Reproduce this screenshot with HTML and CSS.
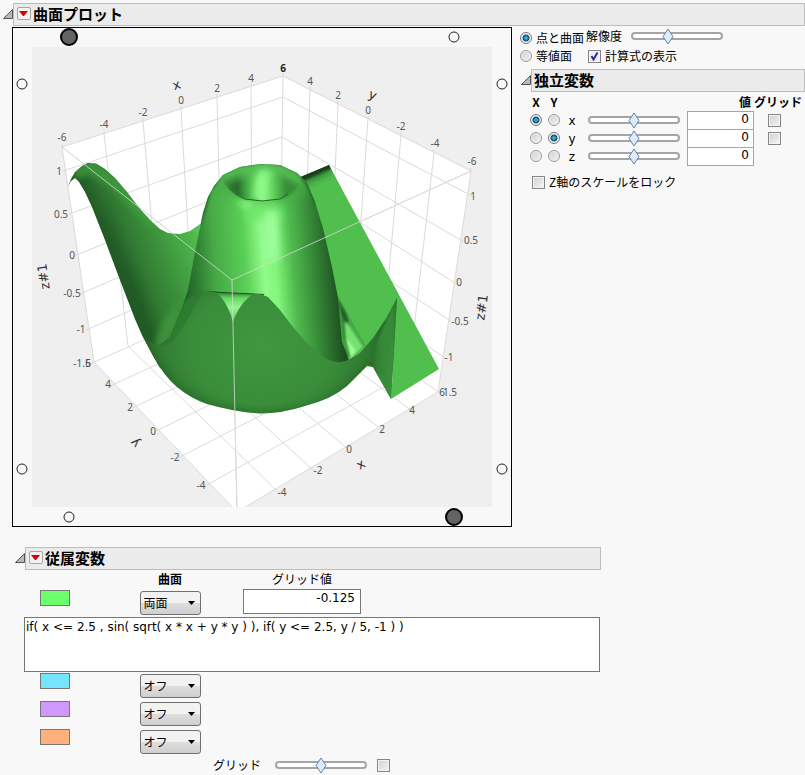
FILE: index.html
```html
<!DOCTYPE html>
<html lang="ja">
<head>
  <meta charset="utf-8">
  <title>曲面プロット</title>
  <link rel="stylesheet" href="styles.css">
</head>
<body>
  <div class="title">
    <button class="toggle" aria-label="開閉"><svg width="10" height="10"><path d="M.5 9.5L9.500.5V9.500Z"/></svg></button>
    <div class="bar">
      <button class="menu" aria-label="メニュー"><svg width="10" height="6"><path d="M0 0H9L5 5H4Z"/></svg></button>
      <h1>曲面プロット</h1>
    </div>
  </div>

  <div class="main">
    <div class="plot">
      <svg viewBox="12 27 500 500" role="img" aria-label="曲面">
        <defs>
          <linearGradient id="fin" gradientUnits="userSpaceOnUse" x1="108" y1="265" x2="205" y2="225">
            <stop offset="0" stop-color="#1f5522"/>
            <stop offset=".2" stop-color="#2d7030"/>
            <stop offset=".5" stop-color="#3b903b"/>
            <stop offset=".85" stop-color="#4fb84e"/>
            <stop offset="1" stop-color="#5bce58"/>
          </linearGradient>
          <linearGradient id="tower" gradientUnits="userSpaceOnUse" x1="184" y1="270" x2="337" y2="258">
            <stop offset="0" stop-color="#246028"/>
            <stop offset=".1" stop-color="#328234"/>
            <stop offset=".2" stop-color="#46a846"/>
            <stop offset=".4" stop-color="#5acf56"/>
            <stop offset=".52" stop-color="#91fb8a"/>
            <stop offset=".6" stop-color="#82f57c"/>
            <stop offset=".71" stop-color="#50ba4e"/>
            <stop offset=".84" stop-color="#378b38"/>
            <stop offset="1" stop-color="#1c4e20"/>
          </linearGradient>
          <linearGradient id="crater" gradientUnits="userSpaceOnUse" x1="221" y1="186" x2="302" y2="183">
            <stop offset="0" stop-color="#3b903b"/>
            <stop offset=".2" stop-color="#286b2b"/>
            <stop offset=".36" stop-color="#50c04f"/>
            <stop offset=".5" stop-color="#8efa88"/>
            <stop offset=".64" stop-color="#5fd55c"/>
            <stop offset=".8" stop-color="#388d39"/>
            <stop offset="1" stop-color="#3b933c"/>
          </linearGradient>
          <radialGradient id="bowl" gradientUnits="userSpaceOnUse" cx="262" cy="345" r="120" gradientTransform="translate(0 70) scale(1 .8)">
            <stop offset="0" stop-color="#40973f"/>
            <stop offset=".6" stop-color="#3a8d3a"/>
            <stop offset=".85" stop-color="#317c33"/>
            <stop offset="1" stop-color="#286a2b"/>
          </radialGradient>
          <linearGradient id="notch" x1="0" y1="0" x2="0" y2="1">
            <stop offset="0" stop-color="#2f7a31"/>
            <stop offset=".2" stop-color="#66d863"/>
            <stop offset=".5" stop-color="#94f78d"/>
            <stop offset="1" stop-color="#57c855"/>
          </linearGradient>
          <linearGradient id="flap" x1="0" y1="0" x2="1" y2="0">
            <stop offset="0" stop-color="#2b702d"/>
            <stop offset=".35" stop-color="#378a38"/>
            <stop offset=".75" stop-color="#3a903a"/>
            <stop offset="1" stop-color="#2e782f"/>
          </linearGradient>
          <filter id="edge" x="-20%" y="-20%" width="140%" height="140%"><feGaussianBlur stdDeviation="1"/></filter>
          <filter id="soft" x="-50%" y="-50%" width="200%" height="200%"><feGaussianBlur stdDeviation="3"/></filter>
          <filter id="softer" x="-50%" y="-50%" width="200%" height="200%"><feGaussianBlur stdDeviation="6"/></filter>
          <clipPath id="view"><path d="M32 47H492V507H32Z"/></clipPath>
          <clipPath id="flatClip"><path d="M298 178L329 165L439 369L391 399L393 370L350 360Z"/></clipPath>
          <clipPath id="finClip"><path d="M68 187L71 179L75 172L82 166L88 163L96 163.500L105 169L115 178L127 192L140 209L151 221L160 229L168 233L180 234L190 231L203 222L210 290L190 380L160 368L142 335L135 319L120 280L105 240L92 207L85 192L79 182L75 178L71 181Z"/></clipPath>
          <clipPath id="towerClip"><path d="M157 347L170 337L182 308L188 290L195 252L203 213L208 197L214 186L223 175L240 167L260 164L280 165L297 173L307 183L315 202L323 228L332 267L339 303L349 360L337 366L300 360L240 340L180 350Z"/></clipPath>
          <clipPath id="bowlClip"><path d="M142 335L150 342L157 346L163 347L172 343L183 327L193 310Q201 292 208 291L217 293C225 300 230 311 233 322C237 310 244 300 252 295L260 294L268 297L280 310L293 327L307 343L320 355Q337 367 350 359L360 353L373 338L387 317L397 298L391 399L373 367L367 366L347 386Q332 399 305 406Q282 413.500 260 413.500Q235 412 207 404Q190 398 177 387Q164 376 153 356Z"/></clipPath>
        </defs>

        <rect class="backdrop" x="32" y="47" width="460" height="460"/>
        <g clip-path="url(#view)">
          <path class="cube" d="M62 147L283 76L471 171L438 392L237 512L94 362Z"/>
          <path class="gridline" d="M62 144V147L94 362M104 131V134L128 346M143 118V121L161 331M181 106V109L193 318M217 94V97L222 305M251 83V86L252 292M283 73V76L280 279
            M310 86V89L304 297M338 101V104L329 315M368 116V119L353 335M401 132V135L382 353M434 150V153L409 373M471 168V171L438 392
            M63 171L283 97L472 196M69 214L282 137L466 243M74 256L281 172L458 285M80 294L280 208L452 322M86 330L280 245L445 358M90 364L280 279L441 394
            M110 386L304 297M132 408L329 315M154 432L353 335M178 458L382 353M205 486L409 373
            M412 411L252 292M382 430L222 305M349 450L193 318M314 471L161 331M279 493L128 346
            M62 147L283 76L471 171M94 362L237 512L438 392"/>
          <path class="floor-edge" d="M62 147L232 280L471 171M232 280L237 512"/>

          <!-- flat part of the surface -->
          <g clip-path="url(#flatClip)">
            <path fill="#50bf4e" d="M290 160H445V405H290Z"/>
            <path fill="#123515" filter="url(#edge)" d="M295 176L330 161L333 168L304 181Z"/>
            <path fill="#225d26" opacity=".6" filter="url(#soft)" d="M299 180L329 166L333 172L307 184Z"/>
          </g>

          <!-- far left wing -->
          <g clip-path="url(#finClip)">
            <path fill="url(#fin)" d="M60 150H230V400H60Z"/>
            <path fill="#43a043" opacity=".7" filter="url(#soft)" d="M72 168L92 160L120 180L160 225L150 228L110 187L88 174L76 180Z"/>
            <path fill="#1e5221" opacity=".7" filter="url(#softer)" d="M80 185L95 211L145 340L160 350L138 285L110 225Z"/>
            <path fill="#3f9a3f" opacity=".8" filter="url(#soft)" d="M154 345L164 318L180 300L176 330L165 350Z"/>
          </g>

          <!-- central ring -->
          <g clip-path="url(#towerClip)">
            <path fill="url(#tower)" d="M150 150H360V380H150Z"/>
            <path fill="#2f7b31" filter="url(#edge)" d="M150 355L168 337L186 300L196 294L204 290L190 320L172 352Z"/>
            <path fill="#46a846" opacity=".7" filter="url(#softer)" d="M205 180L240 160H290L312 186L300 199L265 208L225 196Z"/>
            <path fill="none" stroke="#225e26" stroke-width="3" opacity=".8" filter="url(#edge)" d="M200 224L210 190L222 174L240 166L260 163L281 164L298 172L309 187L317 206"/>
            <path fill="#6de569" opacity=".7" filter="url(#soft)" d="M232 198L255 204L280 205L284 220L250 220Z"/>
            <path fill="#a1ffa0" opacity=".8" filter="url(#soft)" d="M264 211L278 211L280 260H265Z"/>
            <path fill="#94fb8e" opacity=".7" filter="url(#soft)" d="M240 202L249 199L252 206L245 209Z"/>
            <path fill="url(#crater)" filter="url(#edge)" d="M222 180L240 172L262 170L284 173L300 184Q291 197 280 200Q262 203 245 199Q231 194 222 180Z"/>
            <path fill="#54be52" opacity=".8" filter="url(#soft)" d="M216 184L226 174L240 166H284L300 176L304 186L284 178L261 174L234 180Z"/>
            <path fill="#8dfb87" opacity=".8" filter="url(#soft)" d="M260 169L274 171L266 183L267 198L253 197Z"/>
            <path fill="none" stroke="#26662a" d="M229 188L236 194L245 199L262 201L280 199L288 194"/>
          </g>

          <!-- valley on the right of the ring -->
          <path fill="#46aa46" d="M338 297L350 318L366 346L350 360L342 342Z"/>
          <path fill="#235c26" filter="url(#edge)" d="M337 297L346 313L349 323L343 321Z"/>
          <path fill="#74e26f" filter="url(#edge)" d="M345 322L350 327L363 347L350 359L345 345Z"/>
          <path fill="#a4ffa1" opacity=".9" filter="url(#edge)" d="M346 338L356 351L351 358Z"/>
          <path fill="none" stroke="#2f7b31" stroke-width="2" filter="url(#edge)" d="M342 318L345 342L349 357"/>

          <!-- front skirt -->
          <path fill="url(#notch)" d="M214 292L255 294L234 323Z"/>
          <path fill="none" stroke="#1d5220" stroke-width="1" d="M208 291.500L222 292.500L264 294.500"/>
          <g clip-path="url(#bowlClip)">
            <path fill="url(#bowl)" d="M130 280H400V420H130Z"/>
            <path fill="none" stroke="#1b4b1e" stroke-width="4" opacity=".5" filter="url(#soft)" d="M130 310L153 357L177 388L207 405L260 415L300 410L327 402L347 388L370 365"/>
            <path fill="url(#flap)" filter="url(#edge)" d="M372 370L377 342L398 294L394 404Z"/>
            <path fill="none" stroke="#2c742e" opacity=".5" filter="url(#edge)" d="M397 300L380 352L383 375M397 304L386 357"/>
          </g>
          <path class="front-edge" d="M62 147L232 280L471 171M232 280L237 512"/>
        </g>

        <g class="ticks">
          <text x="62" y="141">-6</text>
          <text x="104" y="128">-4</text>
          <text x="143" y="116">-2</text>
          <text x="181" y="104">0</text>
          <text x="217" y="92">2</text>
          <text x="251" y="82">4</text>
          <text class="strong" x="283" y="72">6</text>
          <text x="310" y="85">4</text>
          <text x="338" y="99">2</text>
          <text x="368" y="114">0</text>
          <text x="401" y="130">-2</text>
          <text x="435" y="147">-4</text>
          <text x="472" y="165">-6</text>
          <text x="59" y="175">1</text>
          <text x="61" y="218">0.5</text>
          <text x="72" y="259">0</text>
          <text x="72" y="297">-0.5</text>
          <text x="81" y="333">-1</text>
          <text x="82" y="367">-1.5</text>
          <text x="88" y="367">6</text>
          <text x="108" y="388">4</text>
          <text x="130" y="411">2</text>
          <text x="153" y="435">0</text>
          <text x="175" y="461">-2</text>
          <text x="201" y="489">-4</text>
          <text x="473" y="200">1</text>
          <text x="471" y="244">0.5</text>
          <text x="459" y="286">0</text>
          <text x="460" y="325">-0.5</text>
          <text x="449" y="361">-1</text>
          <text x="450" y="396">1.5</text>
          <text x="442" y="396">6</text>
          <text x="412" y="414">4</text>
          <text x="382" y="433">2</text>
          <text x="349" y="453">0</text>
          <text x="318" y="474">-2</text>
          <text x="282" y="496">-4</text>
        </g>
        <g class="axes">
          <text transform="translate(178 89) rotate(-18)">x</text>
          <text transform="translate(371 99) rotate(22)">y</text>
          <text transform="translate(48 276) rotate(-98)">z#1</text>
          <text transform="translate(486 308) rotate(-82)">z#1</text>
          <text transform="translate(138 440) rotate(225)">y</text>
          <text transform="translate(363 468) rotate(-32)">x</text>
        </g>
        <g class="handles">
          <circle cx="454" cy="37" r="5"/>
          <circle cx="22" cy="84" r="5"/>
          <circle cx="502" cy="84" r="5"/>
          <circle cx="22" cy="469" r="5"/>
          <circle cx="502" cy="469" r="5"/>
          <circle cx="69" cy="517" r="5"/>
          <circle class="active" cx="69" cy="37" r="8"/>
          <circle class="active" cx="454" cy="517" r="8"/>
        </g>
      </svg>
    </div>

    <div class="side">
      <div class="line">
        <input type="radio" name="mode" id="surface" checked>
        <label for="surface">点と曲面</label>
        <div class="resolution">
          <label for="resolution">解像度</label>
          <input type="range" id="resolution" value="38">
        </div>
      </div>
      <div class="line">
        <input type="radio" name="mode" id="iso">
        <label class="iso" for="iso">等値面</label>
        <input type="checkbox" id="formula" checked>
        <label for="formula">計算式の表示</label>
      </div>

      <div class="title inner">
        <button class="toggle" aria-label="開閉"><svg width="10" height="10"><path d="M.5 9.500L9.500.5V9.500Z"/></svg></button>
        <div class="bar"><h2>独立変数</h2></div>
      </div>
      <table class="vars">
        <thead>
          <tr><th>X</th><th>Y</th><th></th><th></th><th class="right">値</th><th>グリッド</th></tr>
        </thead>
        <tbody>
          <tr>
            <td><input type="radio" name="ax" aria-label="X: x" checked></td>
            <td><input type="radio" name="ay" aria-label="Y: x"></td>
            <td><label for="vx">x</label></td>
            <td class="range"><input type="range" aria-label="x" value="50"></td>
            <td><input type="text" id="vx" value="0"></td>
            <td class="check"><input type="checkbox" aria-label="x グリッド"></td>
          </tr>
          <tr>
            <td><input type="radio" name="ax" aria-label="X: y"></td>
            <td><input type="radio" name="ay" aria-label="Y: y" checked></td>
            <td><label for="vy">y</label></td>
            <td class="range"><input type="range" aria-label="y" value="50"></td>
            <td><input type="text" id="vy" value="0"></td>
            <td class="check"><input type="checkbox" aria-label="y グリッド"></td>
          </tr>
          <tr>
            <td><input type="radio" name="ax" aria-label="X: z"></td>
            <td><input type="radio" name="ay" aria-label="Y: z"></td>
            <td><label for="vz">z</label></td>
            <td class="range"><input type="range" aria-label="z" value="50"></td>
            <td><input type="text" id="vz" value="0"></td>
            <td></td>
          </tr>
        </tbody>
      </table>
      <div class="line lock">
        <input type="checkbox" id="lock">
        <label for="lock">Z軸のスケールをロック</label>
      </div>
    </div>
  </div>

  <div class="dependent">
    <div class="title">
      <button class="toggle" aria-label="開閉"><svg width="10" height="10"><path d="M.5 9.500L9.500.5V9.500Z"/></svg></button>
      <div class="bar">
        <button class="menu" aria-label="メニュー"><svg width="10" height="6"><path d="M0 0H9L5 5H4Z"/></svg></button>
        <h2>従属変数</h2>
      </div>
    </div>
    <div class="rows">
      <span></span>
      <b class="head">曲面</b>
      <label class="head" for="gridvalue">グリッド値</label>

      <button class="swatch green" aria-label="色 1"></button>
      <select aria-label="曲面 1"><option>両面</option><option>オフ</option></select>
      <input type="text" id="gridvalue" value="-0.125">

      <textarea aria-label="計算式">if( x &lt;= 2.5 , sin( sqrt( x * x + y * y ) ), if( y &lt;= 2.5, y / 5, -1 ) )</textarea>

      <button class="swatch blue" aria-label="色 2"></button>
      <select aria-label="曲面 2"><option>オフ</option><option>両面</option></select>
      <button class="swatch purple" aria-label="色 3"></button>
      <select aria-label="曲面 3"><option>オフ</option><option>両面</option></select>
      <button class="swatch orange" aria-label="色 4"></button>
      <select aria-label="曲面 4"><option>オフ</option><option>両面</option></select>
    </div>
    <div class="line bottom">
      <label for="grid">グリッド</label>
      <input type="range" id="grid" value="50">
      <input type="checkbox" aria-label="グリッドを表示">
    </div>
  </div>
</body>
</html>
```
FILE: styles.css
```css
* {
  box-sizing: border-box;
}

body {
  margin: 0;
  padding-top: 3px;
  background-color: #f8f8f8;
  color: #000;
  font: 12px/18px "Noto Sans CJK JP", sans-serif;
}

button,
input,
select,
textarea {
  margin: 0;
  color: inherit;
  font: inherit;
}

/* section titles */
.title {
  display: flex;
}

.toggle {
  display: flex;
  flex: none;
  align-items: flex-start;
  width: 13px;
  padding: 6px 0 0 3px;
  border: none;
  background: none;
}

.toggle svg {
  flex: none;
}

.toggle path {
  fill: #b9b9b9;
  stroke: #555;
}

.bar {
  display: flex;
  flex: 1;
  align-items: center;
  height: 23px;
  padding: 0 0 2px 3px;
  border: 1px solid #bdbdbd;
  background-color: #ebebeb;
}

.bar h1,
.bar h2 {
  margin: 0;
  font-size: 15px;
  line-height: 18px;
}

.menu {
  display: flex;
  align-items: center;
  justify-content: center;
  width: 14px;
  height: 13px;
  margin-right: 2px;
  padding: 0;
  border: 1px solid #a5a5a5;
  border-radius: 2px;
  background-color: #f2f2f2;
}

.menu path {
  fill: #d00008;
}

/* plot */
.main {
  display: flex;
  gap: 8px;
  padding: 1px 0 0 12px;
}

.plot {
  flex: 0 1 500px;
  border: 1px solid #000;
}

.plot svg {
  display: block;
  width: calc(100% + 2px);
  margin: -1px;
}

.backdrop {
  fill: #efefef;
}

.cube {
  fill: #fff;
}

.gridline,
.floor-edge {
  fill: none;
  stroke: #dadada;
}

.front-edge {
  fill: none;
  stroke: #d4dcd2;
  opacity: 0.8;
}

.ticks {
  fill: #555;
  font: 10px "Noto Sans", sans-serif;
  text-anchor: middle;
}

.ticks .strong {
  fill: #222;
  font-weight: bold;
}

.axes {
  fill: #333;
  font: 13px "DejaVu Sans", sans-serif;
  text-anchor: middle;
}

.handles circle {
  fill: #f8f8f8;
  stroke: #222;
}

.handles .active {
  fill: #636363;
  stroke: #000;
  stroke-width: 2;
}

/* controls */
.side {
  flex: 1;
  min-width: 0;
  padding-top: 2px;
}

.line {
  display: flex;
  align-items: center;
  height: 18px;
}

input[type="radio"],
input[type="checkbox"] {
  flex: none;
  appearance: none;
  width: 12px;
  height: 12px;
  border: 1px solid #999;
  background: linear-gradient(135deg, #ccd0d6, #f6f6f6);
  box-shadow: inset 0 0 0 1px #f4f4f4;
}

input[type="checkbox"] {
  width: 13px;
  height: 13px;
  border-color: #858585;
}

input[type="checkbox"]:checked {
  background: #eef0f6 url("data:image/svg+xml,%3Csvg xmlns='http://www.w3.org/2000/svg' width='11' height='11'%3E%3Cpath d='M2.500 5L4.500 8.500L8.500 1.500' fill='none' stroke='%2330308c' stroke-width='2'/%3E%3C/svg%3E");
}

input[type="radio"] {
  border-radius: 50%;
  background: linear-gradient(135deg, #cfcfcf, #f4f4f4);
}

input[type="radio"]:checked {
  border-color: #777;
  background: radial-gradient(circle, #5cd0f0 0, #1a7cae 2px, #174a6c 3px, #e8eef2 4px);
}

input[type="range"] {
  flex: none;
  appearance: none;
  width: 92px;
  height: 17px;
  background: none;
}

input[type="range"]::-webkit-slider-runnable-track {
  height: 8px;
  border: 2px solid #a5a5a5;
  border-radius: 4px;
  background-color: #fff;
}

input[type="range"]::-webkit-slider-thumb {
  appearance: none;
  width: 12px;
  height: 17px;
  margin-top: -6px;
  background: url("data:image/svg+xml,%3Csvg xmlns='http://www.w3.org/2000/svg' width='12' height='17'%3E%3Cpath d='M6 1L11 8.500L6 16L1 8.500Z' fill='%23dcecfc' stroke='%236284a8'/%3E%3C/svg%3E");
}

input[type="text"],
textarea {
  border: 1px solid #777;
  background-color: #fff;
  font: 12px/16px "DejaVu Sans", "Noto Sans CJK JP", sans-serif;
}

.line input[type="radio"],
.line input[type="checkbox"] {
  margin-right: 4px;
}

.resolution {
  display: flex;
  gap: 9px;
  align-items: center;
  padding: 0 0 4px 2px;
}

.iso {
  margin-right: 16px;
}

.inner {
  margin-top: 4px;
}

.inner .toggle {
  width: 11px;
  padding-left: 1px;
}

.inner .bar {
  padding-left: 2px;
}

/* independent variables */
.vars {
  margin: 1px 0 0 7px;
  border-collapse: collapse;
}

.vars th,
.vars td {
  width: 18px;
  height: 18px;
  padding: 0;
  line-height: 18px;
  text-align: center;
  white-space: nowrap;
}

.vars td {
  vertical-align: middle;
}

.vars td input {
  display: block;
  margin: 0 auto;
}

.vars label {
  font: 12px/16px "DejaVu Sans", sans-serif;
}

.vars .range {
  width: 106px;
}

.vars .right {
  padding-right: 3px;
  text-align: right;
}

.vars .check input {
  margin-left: 14px;
}

.vars input[type="text"] {
  width: 67px;
  height: 19px;
  margin-bottom: -1px;
  padding: 0 4px 3px;
  border-color: #a5a5a5;
  text-align: right;
}

.lock {
  margin: 8px 0 0 12px;
}

/* dependent variables */
.dependent {
  max-width: 601px;
  margin-top: 20px;
}

.dependent .title {
  margin-left: 12px;
}

.rows {
  display: grid;
  grid-template-columns: 92px 108px 156px 1fr;
  grid-template-rows: 19px 28px 55px repeat(3, 28px);
  padding: 0 1px 0 24px;
  align-items: start;
}

.head {
  justify-self: center;
}

.swatch {
  grid-column: 1;
  width: 30px;
  height: 16px;
  margin: 1px 0 0 16px;
  border: 1px solid #777;
}

.green { background-color: #6cff6c; }
.blue { background-color: #76e4ff; }
.purple { background-color: #d098ff; }
.orange { background-color: #ffb07c; }

.rows select {
  appearance: none;
  grid-column: 2;
  justify-self: center;
  width: 61px;
  height: 24px;
  margin-top: 2px;
  padding: 0 0 1px 3px;
  border: 1px solid #707070;
  border-radius: 3px;
  background:
    url("data:image/svg+xml,%3Csvg xmlns='http://www.w3.org/2000/svg' width='7' height='4'%3E%3Cpath d='M0 0H7L3.500 4Z'/%3E%3C/svg%3E") no-repeat right 5px center,
    linear-gradient(#f2f2f2 50%, #dedede 50%, #cfcfcf);
}

.rows input {
  justify-self: center;
  width: 118px;
  height: 25px;
  padding: 0 5px 7px;
  text-align: right;
}

.rows textarea {
  grid-column: 1 / -1;
  width: 100%;
  height: 55px;
  padding: 1px;
  resize: none;
}

.bottom {
  gap: 14px;
  padding-left: 213px;
}

.bottom input[type="checkbox"] {
  margin-left: -4px;
}
```
